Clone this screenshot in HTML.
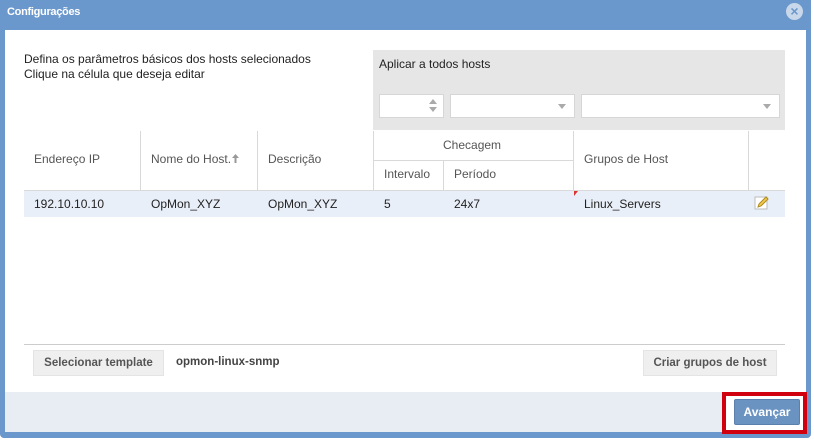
<!DOCTYPE html>
<html><head><meta charset="utf-8"><style>
*{box-sizing:border-box;margin:0;padding:0}
body{width:814px;height:440px;background:#fff;position:relative;overflow:hidden;font-family:"Liberation Sans",Arial,sans-serif;font-size:12px;color:#333}
.win{position:absolute;left:0;top:0;width:811px;height:438px;background:#6b98cc;border-radius:0 0 4px 4px}
.title{position:absolute;left:7px;top:6px;color:#fff;font-weight:bold;font-size:11px;letter-spacing:-.3px}
.close{position:absolute;left:786px;top:3px;width:17px;height:17px;border-radius:50%;background:#c9d7ea;color:#6b98cc;font-weight:bold;font-size:14px;line-height:17px;text-align:center}
.bodyw{position:absolute;left:5px;top:30px;width:801px;height:362px;background:#fff}
.foot{position:absolute;left:5px;top:392px;width:801px;height:40px;background:#e8edf4}
.a{position:absolute;white-space:nowrap}
.gray{position:absolute;left:373px;top:50px;width:412px;height:80px;background:#e6e6e6}
.inp{position:absolute;top:94px;height:24px;background:#fff;border:1px solid #d6d6d6}
.arr{position:absolute;right:8px;top:9px;width:0;height:0;border-left:4px solid transparent;border-right:4px solid transparent;border-top:5px solid #aaa}
.hl{position:absolute;background:#d9d9d9}
.h{position:absolute;color:#555}
.btn{position:absolute;top:350px;height:26px;background:#efefef;border:1px solid #e4e4e4;color:#555;font-weight:bold;font-size:11.5px;line-height:24px;text-align:center}
</style></head><body>
<div class="win"></div>
<div class="title">Configurações</div>
<div class="close">×</div>
<div class="bodyw"></div>
<div class="foot"></div>
<div class="a" style="left:24px;top:52px;color:#222">Defina os parâmetros básicos dos hosts selecionados</div>
<div class="a" style="left:24px;top:67px;color:#222">Clique na célula que deseja editar</div>
<div class="gray"></div>
<div class="a" style="left:379px;top:57px;color:#222">Aplicar a todos hosts</div>
<div class="inp" style="left:379px;width:65px">
 <div style="position:absolute;right:6px;top:4px;border-left:4px solid transparent;border-right:4px solid transparent;border-bottom:5px solid #aaa"></div>
 <div style="position:absolute;right:6px;top:12px;border-left:4px solid transparent;border-right:4px solid transparent;border-top:5px solid #aaa"></div>
</div>
<div class="inp" style="left:450px;width:125px"><div class="arr"></div></div>
<div class="inp" style="left:581px;width:199px"><div class="arr"></div></div>
<div class="hl" style="left:24px;top:190px;width:761px;height:1px"></div>
<div class="hl" style="left:373px;top:160px;width:200px;height:1px"></div>
<div class="hl" style="left:140px;top:131px;width:1px;height:59px"></div>
<div class="hl" style="left:257px;top:131px;width:1px;height:59px"></div>
<div class="hl" style="left:373px;top:131px;width:1px;height:59px"></div>
<div class="hl" style="left:443px;top:160px;width:1px;height:30px"></div>
<div class="hl" style="left:573px;top:131px;width:1px;height:59px"></div>
<div class="hl" style="left:748px;top:131px;width:1px;height:59px"></div>
<div class="h a" style="left:34px;top:152px">Endereço IP</div>
<div class="h a" style="left:151px;top:152px">Nome do Host.<svg width="9" height="11" style="vertical-align:-1px"><path d="M4.5 1 L1 5 H3.5 V10 H5.5 V5 H8 Z" fill="#999"/></svg></div>
<div class="h a" style="left:268px;top:152px">Descrição</div>
<div class="h a" style="left:443px;top:138px">Checagem</div>
<div class="h a" style="left:384px;top:167px">Intervalo</div>
<div class="h a" style="left:454px;top:167px">Período</div>
<div class="h a" style="left:584px;top:152px">Grupos de Host</div>
<div style="position:absolute;left:24px;top:191px;width:761px;height:26px;background:#e9eff8"></div>
<div class="a" style="left:34px;top:197px;color:#222">192.10.10.10</div>
<div class="a" style="left:151px;top:197px;color:#222">OpMon_XYZ</div>
<div class="a" style="left:268px;top:197px;color:#222">OpMon_XYZ</div>
<div class="a" style="left:384px;top:197px;color:#222">5</div>
<div class="a" style="left:454px;top:197px;color:#222">24x7</div>
<div style="position:absolute;left:574px;top:191px;border-top:5px solid #d33;border-right:4px solid transparent"></div>
<div class="a" style="left:584px;top:197px;color:#222">Linux_Servers</div>
<svg style="position:absolute;left:754px;top:195px" width="15" height="15"><rect x="1" y="2" width="12" height="12" fill="#fff" stroke="#bbb"/><path d="M4 12 L5 9 L12 2 L14 4 L7 11 Z" fill="#f2c94c" stroke="#b08a20"/></svg>
<div class="hl" style="left:24px;top:344px;width:761px;height:1px;background:#ccc"></div>
<div class="btn" style="left:33px;width:131px">Selecionar template</div>
<div class="a" style="left:176px;top:356px;font-weight:bold;font-size:11.5px;color:#444">opmon-linux-snmp</div>
<div class="btn" style="left:643px;width:134px">Criar grupos de host</div>
<div style="position:absolute;left:722px;top:392px;width:85px;height:42px;border:4px solid #d0000f;background:#fff"></div>
<div style="position:absolute;left:734px;top:399px;width:66px;height:26px;background:#6a93c2;border:1px solid #5a80ad;border-radius:2px;color:#fff;font-weight:bold;text-align:center;line-height:24px">Avançar</div>
</body></html>
